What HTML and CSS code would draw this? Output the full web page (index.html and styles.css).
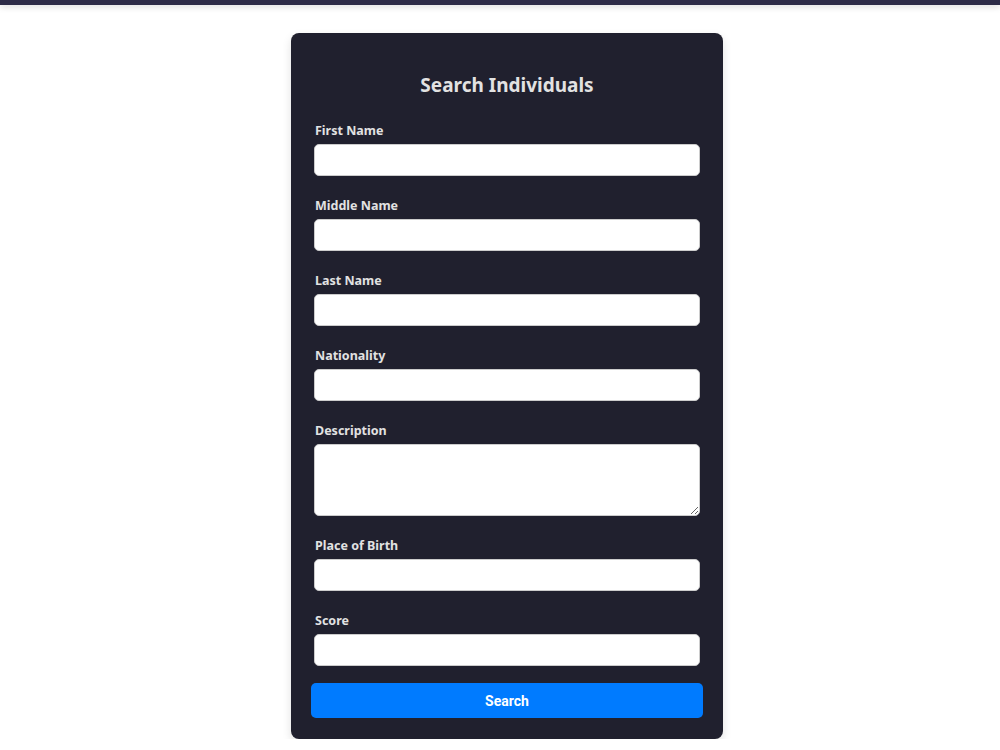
FILE: index.html
```html
<!DOCTYPE html>
<html lang="en">
<head>
    <meta charset="UTF-8">
    <meta name="viewport" content="width=device-width, initial-scale=1.0">
    <title>Search Individuals</title>
    <link rel="stylesheet" href="styles.css">
</head>
<body>
    <div class="topbar"></div>

    <main class="page">
        <div class="container">
            <h2>Search Individuals</h2>
            <form id="searchForm">
                <div class="form-group">
                    <label for="firstName">First Name</label>
                    <input type="text" id="firstName" name="firstName">
                </div>
                <div class="form-group">
                    <label for="middleName">Middle Name</label>
                    <input type="text" id="middleName" name="middleName">
                </div>
                <div class="form-group">
                    <label for="lastName">Last Name</label>
                    <input type="text" id="lastName" name="lastName">
                </div>
                <div class="form-group">
                    <label for="nationality">Nationality</label>
                    <input type="text" id="nationality" name="nationality">
                </div>
                <div class="form-group">
                    <label for="description">Description</label>
                    <textarea id="description" name="description"></textarea>
                </div>
                <div class="form-group">
                    <label for="placeOfBirth">Place of Birth</label>
                    <input type="text" id="placeOfBirth" name="placeOfBirth">
                </div>
                <div class="form-group">
                    <label for="score">Score</label>
                    <input type="number" id="score" name="score">
                </div>

                <button type="submit">Search</button>
            </form>
        </div>
    </main>
</body>
</html>
```

FILE: styles.css
```css
/* Basic reset for body */
body {
    font-family: "Noto Sans", "Open Sans", sans-serif;
    background-color: #ffffff;
    margin: 0;
    padding: 0;
}

/* Thin bar across the top */
.topbar {
    height: 5px;
    background-color: #2d2b47;
    box-shadow: 0 2px 6px rgba(0, 0, 0, 0.15);
}

.page {
    display: flex;
    justify-content: center;
    padding: 28px 0 0 14px;
}

/* Dark card in the middle */
.container {
    width: 392px;
    padding: 20px 20px 21px;
    background-color: #20202e;
    border-radius: 8px;
    box-shadow: 0 4px 10px rgba(0, 0, 0, 0.12);
}

h2 {
    text-align: center;
    font-size: 19px;
    line-height: 24px;
    font-weight: 700;
    margin: 20px 0 21px;
    color: #e2e2e2;
}

.form-group {
    padding: 0 3px;
    margin-bottom: 17px;
}

label {
    display: block;
    padding: 5px 0 0 1px;
    font-size: 12.5px;
    line-height: 16px;
    font-weight: 700;
    color: #e2e2e2;
    margin-bottom: 5px;
}

input, textarea {
    display: block;
    width: 100%;
    height: 32px;
    margin: 0;
    padding: 6px 10px;
    border: 1px solid #cccccc;
    border-radius: 5px;
    background-color: #ffffff;
    font-size: 14px;
    box-sizing: border-box;
}

textarea {
    height: 72px;
    resize: vertical;
}

button {
    display: block;
    width: 100%;
    height: 35px;
    background-color: #007bff;
    color: #ffffff;
    font-family: Roboto, Arial, sans-serif;
    font-size: 14px;
    font-weight: 700;
    border: none;
    border-radius: 5px;
    cursor: pointer;
}

button:hover {
    background-color: #0069d9;
}
```
